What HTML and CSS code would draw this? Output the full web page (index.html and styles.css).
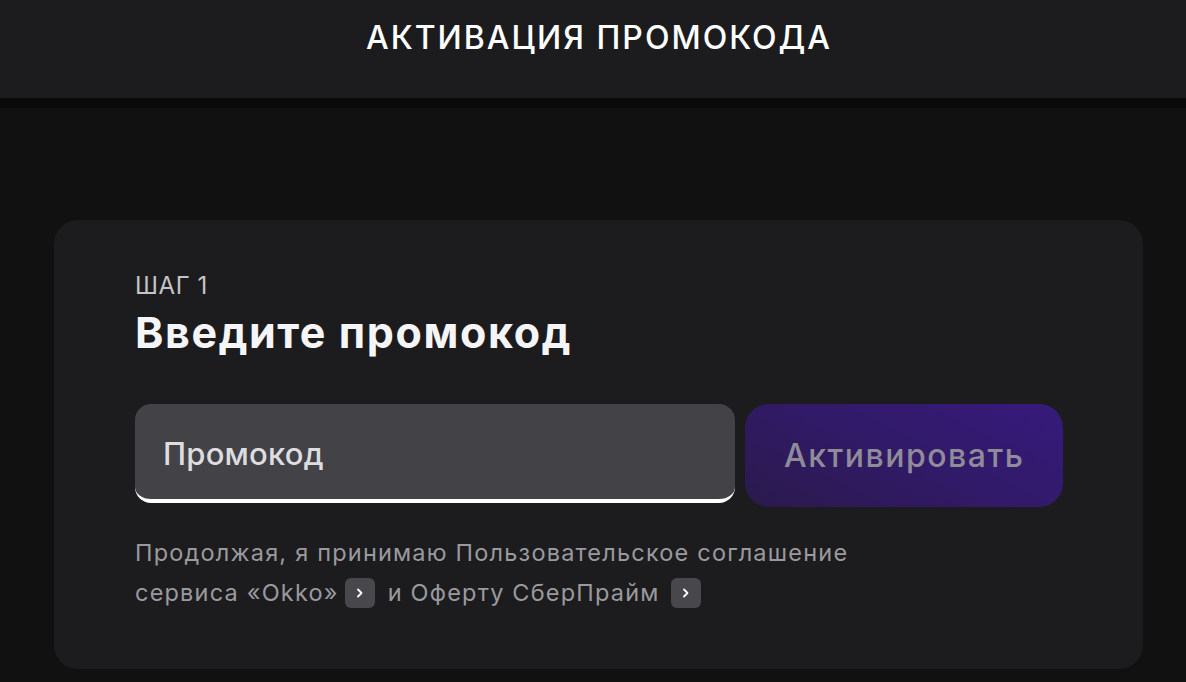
FILE: index.html
```html
<!DOCTYPE html>
<html lang="ru">
<head>
<meta charset="utf-8">
<link rel="stylesheet" href="styles.css">
</head>
<body>
<header class="top">
  <h1 class="top-title">АКТИВАЦИЯ ПРОМОКОДА</h1>
</header>
<div class="top-shadow"></div>
<main class="main">
  <section class="card">
    <div class="step">ШАГ 1</div>
    <h2 class="card-title">Введите промокод</h2>
    <div class="form">
      <div class="field"><span class="placeholder">Промокод</span></div>
      <button class="btn">Активировать</button>
    </div>
    <p class="terms">Продолжая, я принимаю Пользовательское соглашение<br>сервиса «Okko»<span class="chev"><svg width="10" height="12" viewBox="0 0 10 12"><path d="M3 2.5 L6.5 6 L3 9.5" fill="none" stroke="#fff" stroke-width="1.8" stroke-linecap="round" stroke-linejoin="round"/></svg></span>и Оферту СберПрайм<span class="chev chev-end"><svg width="10" height="12" viewBox="0 0 10 12"><path d="M3 2.5 L6.5 6 L3 9.5" fill="none" stroke="#fff" stroke-width="1.8" stroke-linecap="round" stroke-linejoin="round"/></svg></span></p>
  </section>
</main>
</body>
</html>
```
FILE: styles.css
```css
* { box-sizing: border-box; }
html, body { margin: 0; padding: 0; }
body {
  background: #111112;
  font-family: Inter, "Noto Sans", sans-serif;
  color: #fff;
  height: 682px;
  overflow: hidden;
}
.top {
  height: 98px;
  background: #1c1c1e;
  display: flex;
  justify-content: center;
  padding: 18px 0 0 12px;
}
.top-title {
  margin: 0;
  font-size: 32px;
  font-weight: 500;
  letter-spacing: 2px;
  line-height: 40px;
  color: #fff;
}
.top-shadow {
  height: 10px;
  background: #0a0a0b;
}
.main {
  padding: 112px 43px 0 54px;
}
.card {
  background: #1c1c1e;
  border-radius: 24px;
  height: 449px;
  padding: 52px 80px 0 81px;
}
.step {
  font-size: 24px;
  line-height: 28px;
  color: #c4c4c6;
  letter-spacing: 0.6px;
}
.card-title {
  margin: 7px 0 0;
  font-size: 43px;
  line-height: 50px;
  font-weight: 700;
  letter-spacing: 1.6px;
  color: #f5f5f7;
}
.form {
  display: flex;
  gap: 10px;
  margin-top: 47px;
}
.field {
  width: 601px;
  height: 99px;
  background: #434247;
  border-radius: 16px;
  border-bottom: 4px solid #fff;
  display: flex;
  align-items: center;
  padding: 4px 28px 0;
}
.placeholder {
  font-size: 31px;
  color: #dddde0;
  font-weight: 500;
  letter-spacing: 0.2px;
}
.btn {
  width: 318px;
  height: 103px;
  border: 0;
  border-radius: 24px;
  background: linear-gradient(25deg, #2a1a4c 0%, #311a68 50%, #361a7c 100%);
  color: #8f8b98;
  font-family: Inter, "Noto Sans", sans-serif;
  font-size: 32px;
  font-weight: 500;
  letter-spacing: 1.5px;
  padding: 0;
}
.terms {
  margin: 26px 0 0;
  font-size: 23.5px;
  line-height: 40px;
  color: #9a9a9e;
  letter-spacing: 1.2px;
}
.chev {
  display: inline-flex;
  align-items: center;
  justify-content: center;
  width: 30px;
  height: 30px;
  background: #48474c;
  border-radius: 6px;
  vertical-align: middle;
  position: relative;
  top: -2px;
  margin: 0 13px 0 6px;
}
.chev-end {
  margin-left: 11px;
}
```
